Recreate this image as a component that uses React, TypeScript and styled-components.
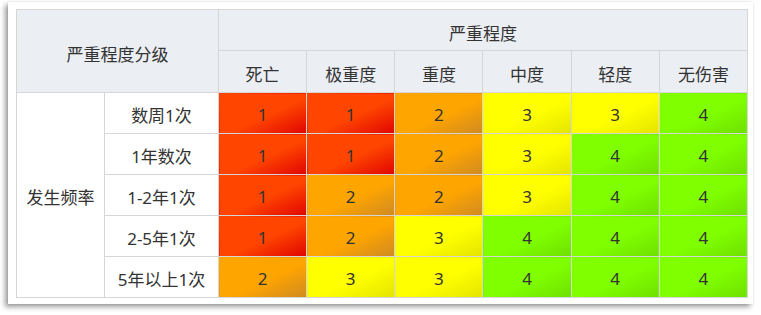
import React from 'react';
import styled, { createGlobalStyle } from 'styled-components';

const GlobalStyle = createGlobalStyle`
  html, body {
    margin: 0;
    padding: 0;
    background: #ffffff;
  }
  body {
    font-family: "Noto Sans", "Noto Sans CJK SC", sans-serif;
    color: #333333;
  }
`;

const LEVELS: Record<number, [string, string]> = {
  1: ['#ff4500', '#e00400'],
  2: ['#ffa500', '#cf8a22'],
  3: ['#ffff00', '#e4e400'],
  4: ['#7fff00', '#6ee000'],
};

const SEVERITIES = ['死亡', '极重度', '重度', '中度', '轻度', '无伤害'];

const ROWS: { label: string; levels: number[] }[] = [
  { label: '数周1次', levels: [1, 1, 2, 3, 3, 4] },
  { label: '1年数次', levels: [1, 1, 2, 3, 4, 4] },
  { label: '1-2年1次', levels: [1, 2, 2, 3, 4, 4] },
  { label: '2-5年1次', levels: [1, 2, 3, 4, 4, 4] },
  { label: '5年以上1次', levels: [2, 3, 3, 4, 4, 4] },
];

const App = () => {
  return (
    <>
      <GlobalStyle />
      <Page>
        <Card>
          <Matrix>
            <colgroup>
              <col style={{ width: 88 }} />
              <col style={{ width: 114 }} />
              {SEVERITIES.map((s) => (
                <col key={s} />
              ))}
            </colgroup>
            <thead>
              <HeadRow $height={41}>
                <HeadCell rowSpan={2} colSpan={2}>
                  严重程度分级
                </HeadCell>
                <HeadCell colSpan={6}>严重程度</HeadCell>
              </HeadRow>
              <HeadRow $height={42}>
                {SEVERITIES.map((s) => (
                  <HeadCell key={s}>{s}</HeadCell>
                ))}
              </HeadRow>
            </thead>
            <tbody>
              {ROWS.map((row, i) => (
                <BodyRow key={row.label}>
                  {i === 0 && <LabelCell rowSpan={ROWS.length}>发生频率</LabelCell>}
                  <LabelCell>{row.label}</LabelCell>
                  {row.levels.map((lv, j) => (
                    <LevelCell key={j} $level={lv}>
                      {lv}
                    </LevelCell>
                  ))}
                </BodyRow>
              ))}
            </tbody>
          </Matrix>
        </Card>
      </Page>
    </>
  );
};

const Page = styled.div`
  padding: 2px 8px 12px 8px;
  width: 761px;
  box-sizing: border-box;
`;

const Card = styled.div`
  width: 745px;
  box-sizing: border-box;
  padding: 7px 5px 6px 8px;
  background: #ffffff;
  box-shadow: -3px 3px 5px rgba(0, 0, 0, 0.38), 0 0 2px rgba(0, 0, 0, 0.12);
`;

const Matrix = styled.table`
  width: 732px;
  table-layout: fixed;
  border-collapse: collapse;
  border: 1px solid #cfcfcf;
  font-size: 17px;
`;

const HeadRow = styled.tr<{ $height: number }>`
  height: ${(p) => p.$height}px;
`;

const BodyRow = styled.tr`
  height: 41px;
`;

const HeadCell = styled.th`
  background: #ebeef3;
  border: 1px solid #d6d6d6;
  font-weight: 400;
  text-align: center;
  padding: 4px 0 0 0;
  color: #333333;
`;

const LabelCell = styled.td`
  background: #ffffff;
  border: 1px solid #d6d6d6;
  text-align: center;
  padding: 2px 0 0 0;
  white-space: nowrap;
`;

const LevelCell = styled.td<{ $level: number }>`
  border: 1px solid #d6d6d6;
  text-align: center;
  padding: 2px 0 0 0;
  color: #333333;
  background: linear-gradient(
    to bottom right,
    ${(p) => LEVELS[p.$level][0]} 55%,
    ${(p) => LEVELS[p.$level][1]} 100%
  );
`;

export default App;
